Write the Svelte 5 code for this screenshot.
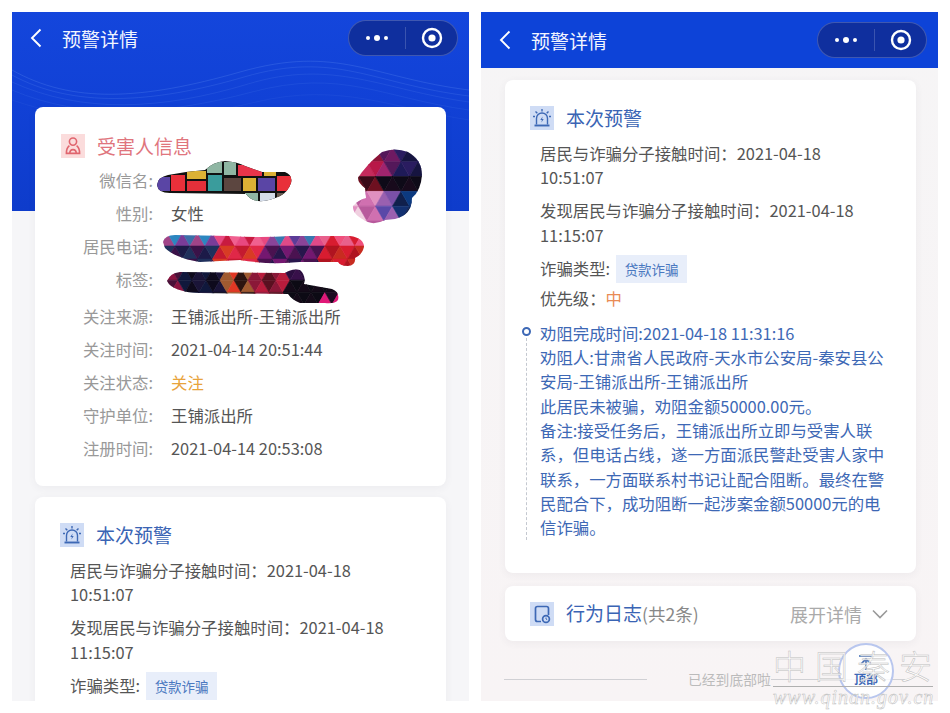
<script lang="ts">
    type Poly = { points: string; fill: string };
    type ColorAt = (x: number, y: number, i: number) => string;

    const victimRows = [
        { label: "关注来源:", value: "王铺派出所-王铺派出所" },
        { label: "关注时间:", value: "2021-04-14 20:51:44" },
        { label: "关注状态:", value: "关注", warn: true },
        { label: "守护单位:", value: "王铺派出所" },
        { label: "注册时间:", value: "2021-04-14 20:53:08" },
    ];

    const maskedRows = [
        { label: "微信名:", value: "" },
        { label: "性别:", value: "女性" },
        { label: "居民电话:", value: "" },
        { label: "标签:", value: "" },
    ];

    const advice = [
        "劝阻完成时间:2021-04-18 11:31:16",
        "劝阻人:甘肃省人民政府-天水市公安局-秦安县公安局-王铺派出所-王铺派出所",
        "此居民未被骗\uFF0C劝阻金额50000.00元。",
        "备注:接受任务后\uFF0C王铺派出所立即与受害人联系\uFF0C但电话占线\uFF0C遂一方面派民警赴受害人家中联系\uFF0C一方面联系村书记让配合阻断。最终在警民配合下\uFF0C成功阻断一起涉案金额50000元的电信诈骗。",
    ];

    // the scribbled-over patches on the left phone
    const cells = [
        [157, 177, 13, 14, "#5a45a5"],
        [171, 175, 14, 16, "#e9303a"],
        [187, 171, 19, 8, "#dcb135"],
        [187, 181, 19, 10, "#e4303a"],
        [207, 162, 15, 11, "#8fb6a3"],
        [224, 162, 12, 13, "#8fb6a3"],
        [208, 175, 14, 16, "#3a9c9c"],
        [224, 178, 17, 13, "#5c4640"],
        [238, 165, 24, 11, "#e9344a"],
        [243, 178, 13, 13, "#dcb135"],
        [264, 172, 12, 4, "#dcb135"],
        [258, 178, 17, 13, "#5a45a5"],
        [277, 176, 16, 15, "#e9303a"],
        [245, 193, 13, 9, "#8fb6a3"],
        [260, 193, 15, 9, "#d3dbe8"],
        [277, 193, 13, 4, "#6a5a50"],
    ] as const;

    function mosaic(x0: number, y0: number, x1: number, y1: number, size: number, colorAt: ColorAt): Poly[] {
        const polys: Poly[] = [];
        const h = size * 0.87;
        let i = 0;
        for (let r = 0; y0 + r * h < y1; r++) {
            const shift = r % 2 ? size / 2 : 0;
            for (let x = x0 - size + shift; x < x1; x += size) {
                const y = y0 + r * h;
                polys.push({
                    points: `${x},${y + h} ${x + size / 2},${y} ${x + size},${y + h}`,
                    fill: colorAt(x + size / 2, y + h / 2, i++),
                });
                polys.push({
                    points: `${x + size / 2},${y} ${x + size},${y + h} ${x + size * 1.5},${y}`,
                    fill: colorAt(x + size, y + h / 2, i++),
                });
            }
        }
        return polys;
    }

    const pick = (list: string[], i: number) => list[i % list.length];

    const headPatch = mosaic(350, 147, 425, 227, 17, (x, y, i) => {
        if (y < 176) {
            if (x < 378) return pick(["#b81848", "#8c1438", "#c42a5c"], i);
            if (x < 398) return pick(["#6e1a62", "#a0246e", "#54185a"], i);
            return pick(["#1e1a58", "#2a1c60", "#161440"], i);
        }
        if (y < 192) {
            if (x < 376) return pick(["#6e1020", "#3a0a18"], i);
            return pick(["#180a1c", "#0e0a18"], i);
        }
        if (x < 376) return pick(["#d070b0", "#e090c0", "#f0d0e0", "#b85a9c"], i);
        if (x < 398) return pick(["#7a50a8", "#5a48a8", "#9a60b0"], i);
        return pick(["#123070", "#10204c", "#0c3a80"], i);
    });

    const phonePatch = mosaic(160, 233, 366, 268, 15, (x, y, i) => {
        if (y < 247) {
            if (x < 218) return pick(["#7a3c98", "#3c6ea8", "#a04488", "#2c86c0"], i);
            if (x < 270) return pick(["#e84880", "#c81a40", "#f06090"], i);
            if (x < 322) return pick(["#8a4498", "#3878b0", "#e04a88", "#5c3c98"], i);
            return pick(["#d81c30", "#f0507c", "#e8608c"], i);
        }
        if (x < 216) return pick(["#1c1a48", "#20305c", "#3a1248"], i);
        if (x < 262) return pick(["#d83c24", "#e02848", "#c41a30"], i);
        if (x < 322) return pick(["#4a1250", "#28164c", "#741870"], i);
        return pick(["#c82c20", "#d81c30", "#b01420"], i);
    });

    const tagPatch = mosaic(164, 268, 342, 306, 14, (x, y, i) => {
        if (y > 296 && x > 318) return pick(["#e01878", "#1c0a20"], i);
        if (x < 180) return pick(["#8a1440", "#4a1038"], i);
        if (x < 222) return pick(["#1a1438", "#10183c", "#0e0a1c"], i);
        if (x < 252) return pick(["#2c1410", "#a05a30", "#e03824"], i);
        if (x < 286) return pick(["#b81c3c", "#5a1020", "#8a1838"], i);
        if (y < 284) return pick(["#38104a", "#2c0e40"], i);
        return pick(["#140a18", "#0c0a14"], i);
    });
</script>

{#snippet navbar(title: string)}
    <div class="nav">
        <svg class="back" viewBox="0 0 12 20" width="12" height="20">
            <path d="M10.5 1.5 2 10l8.5 8.5" fill="none" stroke="#fff" stroke-width="1.9" />
        </svg>
        <span class="nav-title">{title}</span>
        <div class="capsule">
            <svg viewBox="0 0 24 8" width="24" height="8">
                <circle cx="3" cy="4" r="2" fill="#fff" />
                <circle cx="12" cy="4" r="3" fill="#fff" />
                <circle cx="21" cy="4" r="2" fill="#fff" />
            </svg>
            <i class="divider"></i>
            <svg viewBox="0 0 22 22" width="22" height="22">
                <circle cx="11" cy="11" r="9" fill="none" stroke="#fff" stroke-width="2.4" />
                <circle cx="11" cy="11" r="3.6" fill="#fff" />
            </svg>
        </div>
    </div>
{/snippet}

{#snippet alarmIcon()}
    <svg class="badge blue-badge" viewBox="0 0 24 24" width="24" height="24">
        <g fill="none" stroke="#3d68b5" stroke-width="1.4">
            <path d="M6.5 18.5v-6a5.5 5.5 0 0 1 11 0v6" />
            <path d="M4.5 19.5h15" stroke-width="1.9" />
            <path d="M12 3v2.6M5.5 5.5l1.8 1.8M18.5 5.5l-1.8 1.8M3 10.5h2M19 10.5h2" />
        </g>
        <path d="M12.6 10.5 10.3 14h1.6l-.5 2.6 2.3-3.5h-1.6z" fill="#3d68b5" />
    </svg>
{/snippet}

{#snippet alertBody(withPriority: boolean)}
    <div class="section-title blue">
        {@render alarmIcon()}
        <span>本次预警</span>
    </div>
    <div class="alert-lines">
        <p>居民与诈骗分子接触时间&#xFF1A;2021-04-18<br />10:51:07</p>
        <p>发现居民与诈骗分子接触时间&#xFF1A;2021-04-18<br />11:15:07</p>
        <p class="type-line">诈骗类型:<span class="tag">贷款诈骗</span></p>
        {#if withPriority}
            <p>优先级&#xFF1A;<span class="mid">中</span></p>
        {/if}
    </div>
{/snippet}

<div class="page">
    <section class="phone">
        <div class="hero">
            <svg viewBox="0 0 457 199" width="457" height="199" preserveAspectRatio="none">
                <g fill="none" stroke="#5f8cf0" stroke-width="1">
                    <path d="M0 58C60 92 130 88 228 60S360 66 457 78" opacity=".28" />
                    <path d="M0 63C60 96 140 92 232 65S360 72 457 84" opacity=".22" />
                    <path d="M0 70C70 102 150 98 236 72S370 78 457 90" opacity=".18" />
                    <path d="M0 78C70 108 150 104 240 80S370 86 457 98" opacity=".14" />
                    <path d="M0 88C80 116 160 110 244 90S380 96 457 108" opacity=".1" />
                </g>
            </svg>
        </div>
        <div class="phone-body">
            {@render navbar("预警详情")}
            <div class="card victim">
                <div class="section-title red">
                    <svg class="badge red-badge" viewBox="0 0 24 24" width="24" height="24">
                        <g fill="none" stroke="#e0656e" stroke-width="1.6">
                            <circle cx="12" cy="7.6" r="3.6" />
                            <path d="M8.4 11.6C6.2 13.2 5.4 15.6 5.4 19.4h13.2c0-3.8-.8-6.2-3-7.8" />
                            <path d="M8.8 19.4c0-2.4 1.2-3.8 3.2-3.8s3.2 1.4 3.2 3.8" />
                        </g>
                    </svg>
                    <span>受害人信息</span>
                </div>
                <div class="masked">
                    {#each maskedRows as row}
                        <div class="row">
                            <span class="label">{row.label}</span>
                            <span class="value">{row.value}</span>
                        </div>
                    {/each}
                </div>
                <div class="plain">
                    {#each victimRows as row}
                        <div class="row">
                            <span class="label">{row.label}</span>
                            <span class="value" class:warn={row.warn}>{row.value}</span>
                        </div>
                    {/each}
                </div>
            </div>
            <div class="card alert alert-left">
                {@render alertBody(false)}
            </div>
        </div>

        <svg class="scribbles" viewBox="12 12 457 689" width="457" height="689">
            <defs>
                <clipPath id="clip-name">
                    <path d="M157 185Q158 177 168 175L186 172 205 170Q213 162 225 161 238 162 245 166L262 172 285 172Q293 175 291 183 288 192 280 196 268 202 258 201 250 200 246 194L170 193Q158 193 157 185Z" />
                </clipPath>
                <clipPath id="clip-head">
                    <path d="M382 152Q395 147 408 152 422 160 422 175 421 190 412 198 412 215 395 219L385 220Q375 225 368 222 352 215 353 206 358 200 366 198L365 188Q358 183 358 178 366 165 382 152Z" />
                </clipPath>
                <clipPath id="clip-phone">
                    <path d="M163 242Q165 235 175 235L230 236Q260 238 290 236L350 236Q364 238 364 247 362 255 355 258 356 265 348 266 340 266 338 262L300 262Q270 265 240 260L200 262Q175 258 165 248Z" />
                </clipPath>
                <clipPath id="clip-tag">
                    <path d="M167 281Q170 273 180 272L285 273Q292 268 300 270 306 275 304 284L332 289Q340 292 338 300 335 304 325 303L300 303Q292 300 288 294L200 293Q172 292 167 281Z" />
                </clipPath>
            </defs>
            <g clip-path="url(#clip-name)">
                <rect x="150" y="155" width="150" height="50" fill="#111" />
                {#each cells as [x, y, w, h, fill]}
                    <rect {x} {y} width={w} height={h} {fill} />
                {/each}
            </g>
            <g clip-path="url(#clip-head)">
                {#each headPatch as p}<polygon points={p.points} fill={p.fill} stroke={p.fill} stroke-width="0.6" />{/each}
            </g>
            <g clip-path="url(#clip-phone)">
                {#each phonePatch as p}<polygon points={p.points} fill={p.fill} stroke={p.fill} stroke-width="0.6" />{/each}
            </g>
            <g clip-path="url(#clip-tag)">
                {#each tagPatch as p}<polygon points={p.points} fill={p.fill} stroke={p.fill} stroke-width="0.6" />{/each}
            </g>
        </svg>
    </section>

    <section class="phone right">
        {@render navbar("预警详情")}
        <div class="card alert alert-right">
            {@render alertBody(true)}
            <div class="timeline">
                <i class="dot"></i>
                <i class="dots"></i>
                {#each advice as line}
                    <p>{line}</p>
                {/each}
            </div>
        </div>
        <div class="card log">
            <div class="section-title blue">
                <svg class="badge blue-badge" viewBox="0 0 24 24" width="24" height="24">
                    <g fill="none" stroke="#3d68b5" stroke-width="1.7">
                        <path d="M11 19.5H7.5A2 2 0 0 1 5.5 17.5V6.5a2 2 0 0 1 2-2h9a2 2 0 0 1 2 2V13" />
                        <circle cx="16" cy="17" r="3.4" />
                    </g>
                    <path d="M16 15.5V17l1.2.7" fill="none" stroke="#3d68b5" stroke-width="1" />
                </svg>
                <span>行为日志<small>(共2条)</small></span>
            </div>
            <div class="expand">
                <span>展开详情</span>
                <svg viewBox="0 0 16 10" width="16" height="10">
                    <path d="M1 1.5 8 8.5l7-7" fill="none" stroke="#999" stroke-width="1.6" />
                </svg>
            </div>
        </div>
        <div class="end-note">
            <i></i>
            <span>已经到底部啦</span>
            <i></i>
        </div>
        <div class="to-top">
            <svg viewBox="0 0 20 18" width="20" height="18">
                <path d="M3 2h14M10 16V6M5 10l5-5 5 5" fill="none" stroke="#3d68b5" stroke-width="1.6" />
            </svg>
            <span>顶部</span>
        </div>
    </section>

    <div class="watermark">
        <div class="wm-name">中国秦安</div>
        <div class="wm-url">www.qinan.gov.cn</div>
    </div>
</div>

<style>
    :global(body) {
        background: #fff;
    }

    .page {
        position: relative;
        width: 950px;
        height: 713px;
        box-sizing: border-box;
        padding: 12px 12px 12px;
        display: flex;
        gap: 12px;
        font-family: "Noto Sans CJK SC", "Noto Sans", sans-serif;
        font-size: 16.4px;
        color: #555;
        overflow: hidden;
    }

    .phone {
        position: relative;
        width: 457px;
        height: 689px;
        background: #f6f6f8;
        overflow: hidden;
    }

    .phone.right {
        background: linear-gradient(#f6f5f6, #f8f4f5);
    }

    .hero {
        position: absolute;
        inset: 0 0 auto 0;
        height: 199px;
        background: linear-gradient(#1446dc, #1141d6 45%, #0e3ccb);
    }

    .hero svg {
        display: block;
    }

    .phone-body {
        position: relative;
    }

    .nav {
        height: 52px;
        display: flex;
        align-items: center;
        padding: 0 11px 0 18px;
        color: #fff;
    }

    .right .nav {
        height: 56px;
        background: #0d43d8;
    }

    .back {
        margin-right: 20px;
    }

    .nav-title {
        font-size: 19px;
        flex: 1;
        color: #f2f5ff;
    }

    .capsule {
        width: 110px;
        height: 36px;
        box-sizing: border-box;
        border: 1px solid rgba(255, 255, 255, 0.2);
        border-radius: 18px;
        background: #0f2f9e;
        display: flex;
        align-items: center;
        justify-content: space-between;
        padding: 0 14px 0 16px;
    }

    .divider {
        width: 1px;
        height: 22px;
        background: rgba(255, 255, 255, 0.18);
    }

    .card {
        background: #fff;
        border-radius: 8px;
        box-shadow: 0 2px 8px rgba(60, 60, 90, 0.06);
    }

    .victim {
        margin: 43px 23px 0;
        height: 379px;
        box-sizing: border-box;
        padding-top: 27px;
    }

    .section-title {
        display: flex;
        align-items: center;
        gap: 12px;
        font-size: 19px;
        line-height: 24px;
    }

    .section-title small {
        font-size: 17.5px;
        color: #888;
    }

    .victim .section-title {
        padding-left: 26px;
        margin-bottom: 6px;
    }

    .red {
        color: #e0757d;
    }

    .blue {
        color: #3a64b4;
    }

    .badge {
        display: block;
        flex: none;
    }

    .red-badge {
        background: #fbdcdc;
    }

    .blue-badge {
        background: #cfdcf5;
    }

    .row {
        display: grid;
        grid-template-columns: 118px 1fr;
        column-gap: 18px;
        height: 33px;
        line-height: 33px;
    }

    .label {
        text-align: right;
        color: #999;
    }

    .value {
        color: #555;
    }

    .warn {
        color: #e8a33c;
    }

    .plain {
        margin-top: 4px;
    }

    .alert {
        padding-top: 26px;
    }

    .alert .section-title {
        padding-left: 25px;
    }

    .alert-left {
        margin: 11px 23px 0;
        height: 300px;
        box-sizing: border-box;
    }

    .alert-right {
        margin: 12px 22px 0 24px;
        height: 493px;
        box-sizing: border-box;
    }

    .alert-lines {
        padding: 0 28px 0 35px;
        margin-top: 11px;
        line-height: 24.3px;
    }

    .alert-lines p {
        margin: 0 0 8.7px;
    }

    .alert-lines .type-line {
        display: flex;
        align-items: center;
        height: 28px;
        margin-top: -1px;
        margin-bottom: 3px;
    }

    .tag {
        display: inline-block;
        width: 71px;
        height: 28px;
        margin-left: 6px;
        background: #e8eefa;
        color: #4a78c0;
        font-size: 13.5px;
        line-height: 28px;
        text-align: center;
    }

    .mid {
        color: #e98b55;
    }

    .timeline {
        position: relative;
        margin: 11px 28px 0 35px;
        color: #3d68b5;
        line-height: 24.3px;
    }

    .timeline p {
        margin: 0;
    }

    .dot {
        position: absolute;
        left: -18px;
        top: 6px;
        width: 9px;
        height: 9px;
        box-sizing: border-box;
        border: 2px solid #3d68b5;
        border-radius: 50%;
        background: #fff;
    }

    .dots {
        position: absolute;
        left: -14px;
        top: 17px;
        bottom: 0;
        border-left: 1px dashed #c4c8d0;
    }

    .log {
        margin: 13px 22px 0 24px;
        height: 55px;
        box-sizing: border-box;
        padding: 0 28px 0 25px;
        display: flex;
        align-items: center;
        justify-content: space-between;
    }

    .expand {
        display: flex;
        align-items: center;
        gap: 10px;
        font-size: 18px;
        color: #aaa;
    }

    .end-note {
        margin: 26px 33px 0 23px;
        display: flex;
        align-items: center;
        font-size: 13.8px;
        line-height: 24px;
        color: #bbb;
    }

    .end-note i {
        flex: 1;
        height: 1px;
        background: #d0d0d4;
    }

    .end-note i:first-child {
        flex: none;
        width: 143px;
        margin-right: 41px;
    }

    .to-top {
        position: absolute;
        left: 357px;
        top: 631px;
        width: 56px;
        height: 56px;
        box-sizing: border-box;
        border: 2px solid #b8c6ee;
        border-radius: 50%;
        background: rgba(255, 255, 255, 0.85);
        display: flex;
        flex-direction: column;
        align-items: center;
        padding-top: 9px;
        color: #3d68b5;
        font-size: 12px;
        font-weight: 700;
        line-height: 14px;
    }

    .watermark {
        position: absolute;
        left: 773px;
        top: 645px;
        width: 160px;
        color: rgba(255, 255, 255, 0.8);
        -webkit-text-stroke: 0.5px #bdbdbd;
        text-align: center;
        white-space: nowrap;
    }

    .wm-name {
        font-size: 33px;
        line-height: 41px;
        letter-spacing: 9px;
        font-weight: 300;
        border-bottom: 1px solid #b0b0b0;
    }

    .wm-url {
        font-family: "Liberation Serif", serif;
        font-size: 20px;
        line-height: 20px;
        font-style: italic;
        letter-spacing: 1px;
    }

    .scribbles {
        position: absolute;
        left: 0;
        top: 0;
    }
</style>
